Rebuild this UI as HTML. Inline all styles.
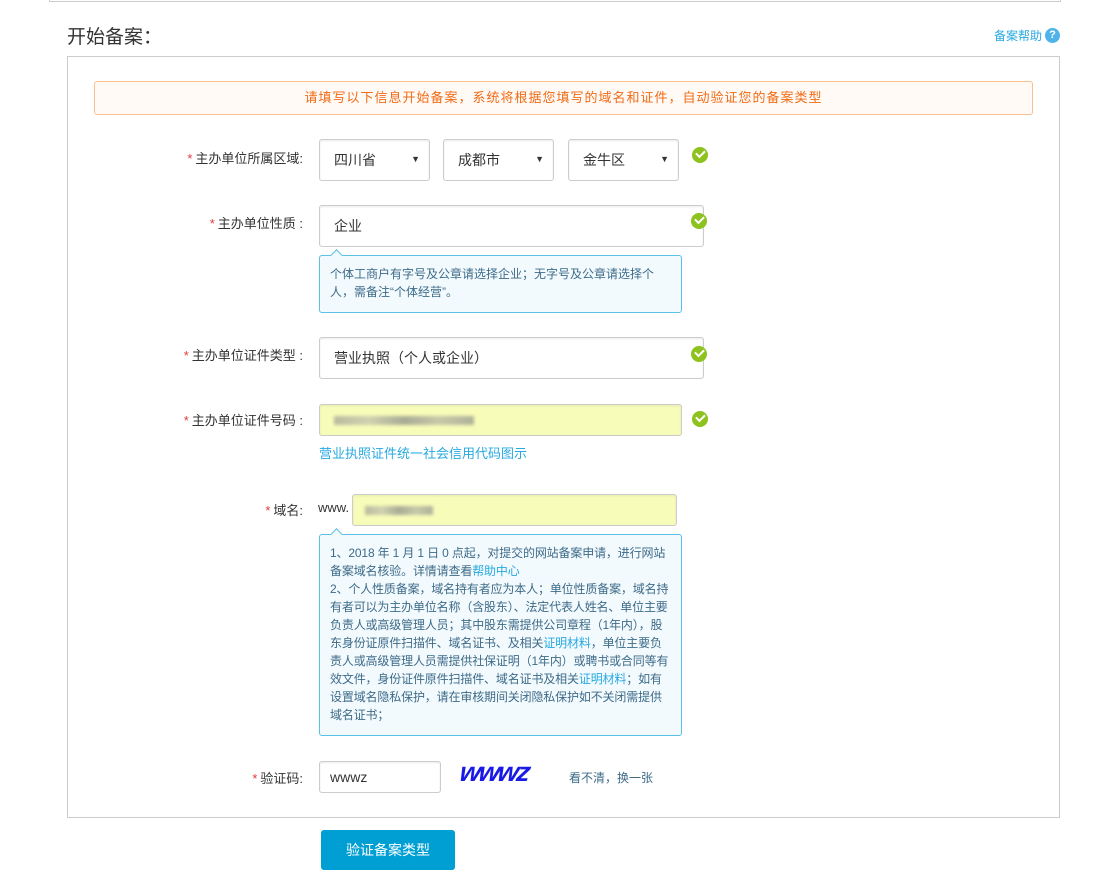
<!DOCTYPE html>
<html><head><meta charset="utf-8"><style>
*{margin:0;padding:0;box-sizing:border-box}
body{width:1105px;height:893px;background:#fff;position:relative;overflow:hidden;font-family:"Liberation Sans","Noto Sans CJK SC",sans-serif;font-size:13px;color:#333}
.a{position:absolute}
.lbl{position:absolute;right:802px;text-align:right;font-size:13px;color:#333;white-space:nowrap}
.lbl b{color:#e4393c;font-weight:normal;margin-right:3px}
.box{position:absolute;border:1px solid #ccc;border-radius:3px;background:#fff;box-shadow:inset 0 1px 2px rgba(0,0,0,.08);font-size:14px;color:#333;padding-left:14px;display:flex;align-items:center}
.sel .ar{position:absolute;right:9px;top:14px;font-size:9px;color:#333}
.ok{position:absolute;width:16px;height:16px;border-radius:50%;background:#8dc21f}
.ok:after{content:"";position:absolute;left:4px;top:3px;width:7px;height:4px;border-left:2px solid #fff;border-bottom:2px solid #fff;transform:rotate(-45deg)}
.tip{position:absolute;border:1px solid #5bc0e8;border-radius:3px;background:#f3fafe;color:#3d6b88;font-size:12px;line-height:18px;padding:0 10px}
.tip:before{content:"";position:absolute;top:-5px;left:12px;width:8px;height:8px;background:#f3fafe;border-left:1px solid #5bc0e8;border-top:1px solid #5bc0e8;transform:rotate(45deg)}
.lk{color:#27a9e1}
.yel{background:#f8fcb9}
.blur{display:inline-block;height:9px;background:linear-gradient(90deg,#b9bba0,#d0d2b0,#a9ab95,#c7c9a8,#b0b29a);filter:blur(1.5px)}
</style></head><body>
<div class="a" style="left:49px;top:-2px;width:1012px;height:4px;border:1px solid #ccc;border-top:none"></div>
<div class="a" style="left:67px;top:22px;font-size:19px;color:#333">开始备案：</div>
<div class="a" style="left:994px;top:27px;font-size:12px;color:#27a9e1">备案帮助</div>
<div class="a" style="left:1045px;top:28px;width:15px;height:15px;border-radius:50%;background:#4fb3ea;color:#fff;font-size:11px;font-weight:bold;text-align:center;line-height:15px">?</div>
<div class="a" style="left:67px;top:56px;width:993px;height:762px;border:1px solid #ccc"></div>
<div class="a" style="left:94px;top:81px;width:939px;height:34px;border:1px solid #fbc08d;border-radius:3px;background:#fffaf5;color:#f26b15;font-size:13px;text-align:center;line-height:32px;letter-spacing:1px">请填写以下信息开始备案，系统将根据您填写的域名和证件，自动验证您的备案类型</div>

<div class="lbl" style="top:148px"><b>*</b>主办单位所属区域:</div>
<div class="box sel" style="left:319px;top:139px;width:111px;height:42px">四川省<span class="ar">▼</span></div>
<div class="box sel" style="left:443px;top:139px;width:111px;height:42px">成都市<span class="ar">▼</span></div>
<div class="box sel" style="left:568px;top:139px;width:111px;height:42px">金牛区<span class="ar">▼</span></div>
<div class="ok" style="left:692px;top:147px"></div>

<div class="lbl" style="top:213px"><b>*</b>主办单位性质 :</div>
<div class="box" style="left:319px;top:205px;width:385px;height:42px">企业</div>
<div class="ok" style="left:691px;top:213px"></div>
<div class="tip" style="left:319px;top:255px;width:363px;height:58px;padding-top:9px">个体工商户有字号及公章请选择企业；无字号及公章请选择个人，需备注“个体经营”。</div>

<div class="lbl" style="top:345px"><b>*</b>主办单位证件类型 :</div>
<div class="box" style="left:319px;top:337px;width:385px;height:42px">营业执照（个人或企业）</div>
<div class="ok" style="left:691px;top:346px"></div>

<div class="lbl" style="top:410px"><b>*</b>主办单位证件号码 :</div>
<div class="box yel" style="left:319px;top:404px;width:363px;height:32px"><span class="blur" style="width:140px"></span></div>
<div class="ok" style="left:692px;top:411px"></div>
<div class="a" style="left:319px;top:443px;font-size:13px;color:#27a9e1">营业执照证件统一社会信用代码图示</div>

<div class="lbl" style="top:500px"><b>*</b>域名:</div>
<div class="a" style="left:318px;top:500px;font-size:13px;color:#333">www.</div>
<div class="box yel" style="left:352px;top:494px;width:325px;height:32px"><span class="blur" style="width:68px;margin-left:-2px"></span></div>
<div class="tip" style="left:319px;top:534px;width:363px;height:202px;padding-top:9px;letter-spacing:-0.15px">1、2018 年 1 月 1 日 0 点起，对提交的网站备案申请，进行网站备案域名核验。详情请查看<span class="lk">帮助中心</span><br>2、个人性质备案，域名持有者应为本人；单位性质备案，域名持有者可以为主办单位名称（含股东）、法定代表人姓名、单位主要负责人或高级管理人员；其中股东需提供公司章程（1年内），股东身份证原件扫描件、域名证书、及相关<span class="lk">证明材料</span>，单位主要负责人或高级管理人员需提供社保证明（1年内）或聘书或合同等有效文件，身份证件原件扫描件、域名证书及相关<span class="lk">证明材料</span>；如有设置域名隐私保护，请在审核期间关闭隐私保护如不关闭需提供域名证书；</div>

<div class="lbl" style="top:768px"><b>*</b>验证码:</div>
<div class="box" style="left:319px;top:761px;width:122px;height:32px;padding-left:10px">wwwz</div>
<div class="a" style="left:460px;top:757px;font-size:27px;font-weight:bold;font-style:italic;color:#1a1ae6;letter-spacing:-2px;transform:skewX(-10deg)">wwwz</div>
<div class="a" style="left:569px;top:769px;font-size:12px;color:#3d6b88">看不清，换一张</div>

<div class="a" style="left:321px;top:830px;width:134px;height:40px;background:#009fd3;border-radius:3px;color:#fff;font-size:14px;text-align:center;line-height:40px">验证备案类型</div>
</body></html>
